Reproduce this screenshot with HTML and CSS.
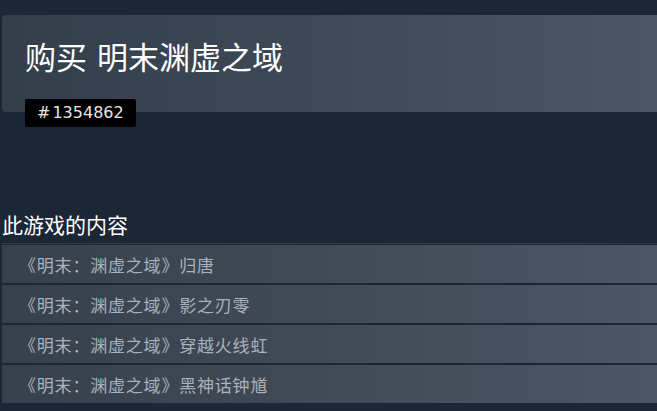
FILE: index.html
```html
<!DOCTYPE html>
<html lang="zh-CN">
<head>
<meta charset="utf-8">
<link rel="stylesheet" href="styles.css">
</head>
<body>
<div class="page">
  <header class="buy-panel">
    <h1 class="buy-title">购买 明末渊虚之域</h1>
    <div class="pkg-badge"><span class="pkg-hash">#</span>1354862</div>
  </header>
  <section class="contents">
    <h2 class="contents-title">此游戏的内容</h2>
    <ul class="item-list">
      <li class="item">《明末：渊虚之域》归唐</li>
      <li class="item">《明末：渊虚之域》影之刃零</li>
      <li class="item">《明末：渊虚之域》穿越火线虹</li>
      <li class="item">《明末：渊虚之域》黑神话钟馗</li>
    </ul>
  </section>
</div>
</body>
</html>
```

FILE: styles.css
```css
html, body {
  margin: 0;
  padding: 0;
  background: #1b2637;
  height: 100%;
  overflow: hidden;
}
body {
  font-family: "Noto Sans CJK SC", "Noto Sans", sans-serif;
}
.page {
  padding: 15px 0 0 2px;
}
.buy-panel {
  display: flex;
  flex-direction: column;
  align-items: flex-start;
  padding: 21px 0 0 23px;
  border-radius: 4px 0 0 4px;
  background: linear-gradient(90deg, #333e4b 0%, #3e4a58 50%, #4a5664 100%);
}
.buy-title {
  margin: 0;
  font-size: 31px;
  font-weight: 400;
  line-height: 40px;
  word-spacing: 3px;
  color: #ffffff;
}
.pkg-badge {
  margin-top: 23px;
  margin-bottom: -15px;
  height: 28px;
  box-sizing: border-box;
  padding: 0 12px;
  background: #000000;
  border-radius: 2px;
  color: #e6e6e6;
  font-family: "DejaVu Sans", sans-serif;
  font-size: 16px;
  line-height: 28px;
}
.pkg-hash {
  margin-right: 2px;
}
.contents {
  margin-top: 98px;
}
.contents-title {
  margin: 0;
  padding-bottom: 5px;
  font-size: 21px;
  font-weight: 400;
  line-height: 28px;
  color: #ffffff;
  border-bottom: 1px solid #2c3b4f;
}
.item-list {
  list-style: none;
  margin: 1px 0 0 0;
  padding: 0;
  display: flex;
  flex-direction: column;
  gap: 2px;
}
.item {
  height: 38px;
  padding-left: 17px;
  display: flex;
  align-items: center;
  font-size: 17px;
  letter-spacing: 0.8px;
  color: #a9b1ba;
  background: linear-gradient(90deg, #37414d 0%, #414b58 50%, #4b5664 100%);
}
```
